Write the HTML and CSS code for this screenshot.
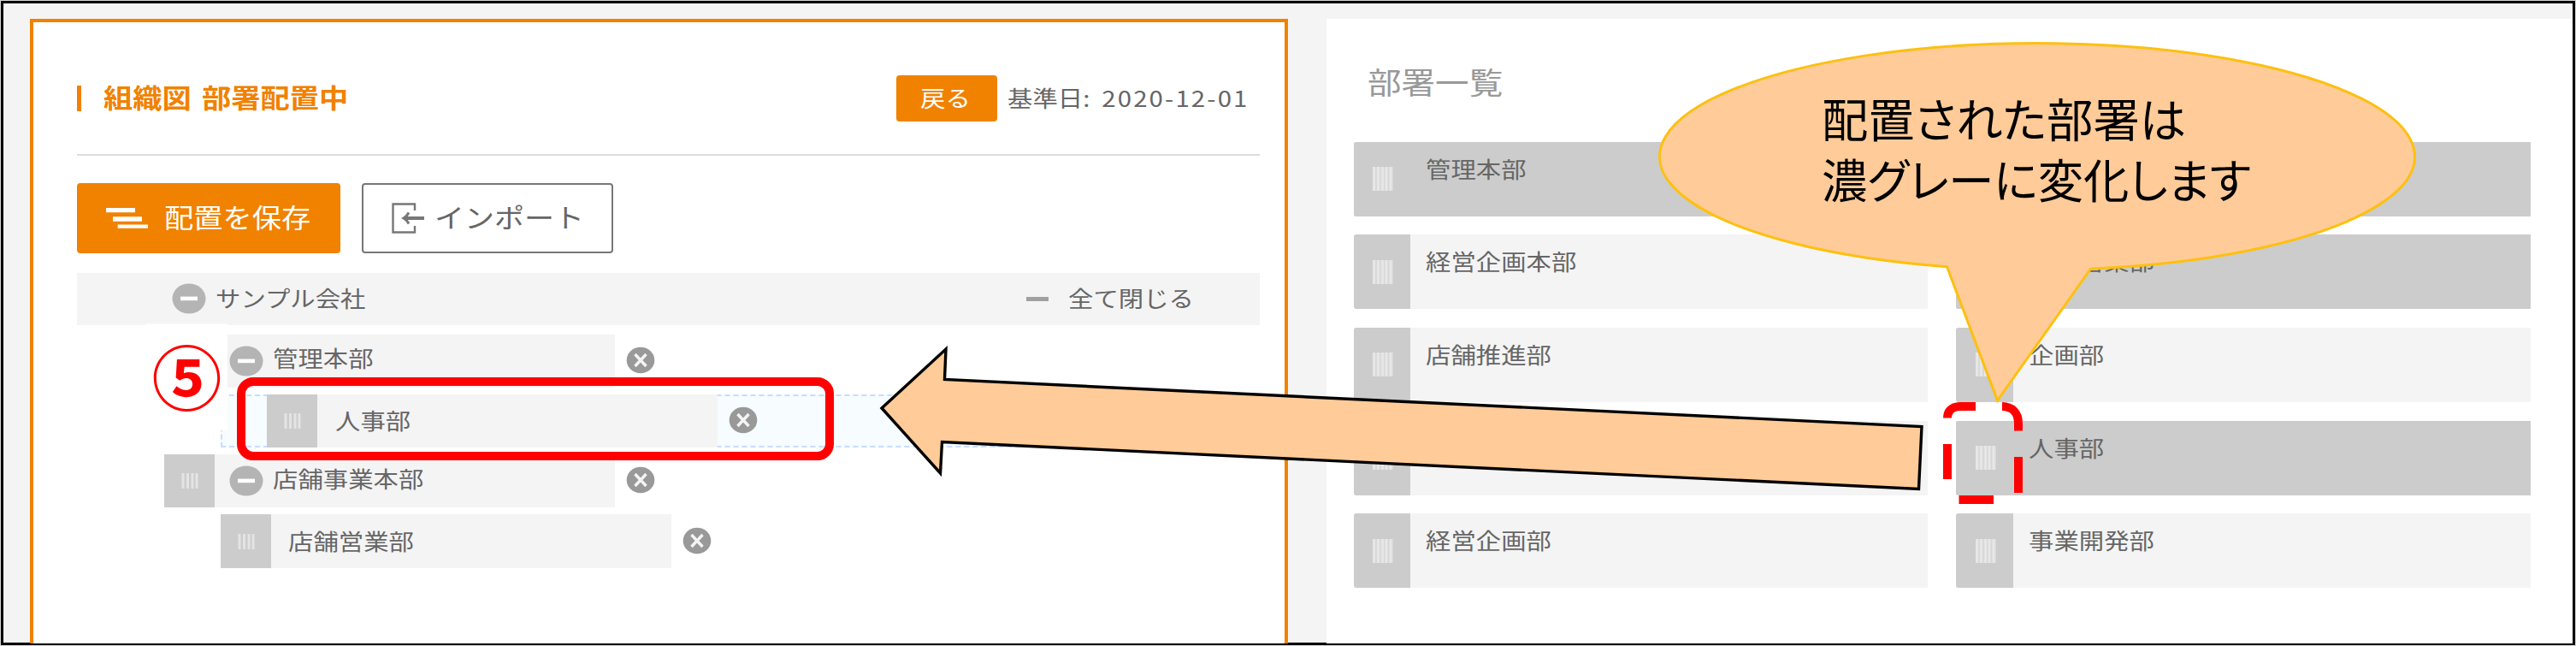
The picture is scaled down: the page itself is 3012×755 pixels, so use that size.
FILE: index.html
```html
<!DOCTYPE html>
<html lang="ja">
<head>
<meta charset="utf-8">
<title>組織図 部署配置中</title>
<link rel="stylesheet" href="styles.css">
</head>
<body>
<svg class="defs" width="0" height="0">
  <symbol id="minus" viewBox="0 0 40 36"><ellipse cx="20" cy="18" rx="19.5" ry="17.6" fill="#b4b4b4"/><rect x="10" y="15.6" width="20" height="4.6" fill="#fff"/></symbol>
  <symbol id="close" viewBox="0 0 34 32"><ellipse cx="17" cy="16" rx="16.3" ry="15.3" fill="#999"/><path d="M10.500 9 23.5 23M23.5 9 10.500 23" stroke="#f4f4f4" stroke-width="3.4"/></symbol>
  <symbol id="grip-s" viewBox="0 0 20 18"><path d="M2 0V18M7.5 0V18M13 0V18M18 0V18" stroke="#e4e4e4" stroke-width="3"/></symbol>
  <symbol id="grip" viewBox="0 0 24 28"><path d="M0 0H24V28H0Z" fill="#d9d9d9"/><path d="M1.5 0V28M6.5 0V28M11.5 0V28M16 0V28M21 0V28" stroke="#e8e8e8" stroke-width="2.600"/></symbol>
</svg>
<div class="frame">
  <main class="board">
    <section class="chart">
      <header class="chart-head">
        <h1 class="title"><span class="wide">組織図 部署配置中</span></h1>
        <button class="back"><span class="wide">戻る</span></button>
        <p class="date"><span class="wide">基準日: <span class="digits">2020-12-01</span></span></p>
      </header>
      <div class="actions">
        <button class="save">
          <svg width="49" height="24"><path d="M0 0h34v5.3H0zM8 10.3h34v5.5H8zM13.7 19.4H49v4.4H13.7z" fill="#fff"/></svg>
          <span class="wide">配置を保存</span>
        </button>
        <button class="import">
          <svg width="40" height="36" fill="none"><path d="M27 9V1.5H1.5V34.5H27V27" stroke="#777" stroke-width="2.4"/><path d="M38 18H15" stroke="#777" stroke-width="4"/><path d="M20 11.5Q17.5 16 14 18Q17.500 20 20 24.500" stroke="#777" stroke-width="3"/></svg>
          <span class="wide">インポート</span>
        </button>
      </div>
      <div class="root">
        <svg class="i-minus"><use href="#minus"/></svg>
        <span class="wide root-name">サンプル会社</span>
        <i class="dash"></i>
        <span class="wide">全て閉じる</span>
      </div>
      <ul class="tree">
        <li class="node n1">
          <div class="body"><svg class="i-minus"><use href="#minus"/></svg><span class="wide">管理本部</span></div>
          <svg class="i-close"><use href="#close"/></svg>
        </li>
        <li class="node n2">
          <div class="handle"><svg><use href="#grip-s"/></svg></div>
          <div class="body leaf"><span class="wide">人事部</span></div>
          <svg class="i-close"><use href="#close"/></svg>
        </li>
        <li class="node n3">
          <div class="handle"><svg><use href="#grip-s"/></svg></div>
          <div class="body"><svg class="i-minus"><use href="#minus"/></svg><span class="wide">店舗事業本部</span></div>
          <svg class="i-close"><use href="#close"/></svg>
        </li>
        <li class="node n4">
          <div class="handle"><svg><use href="#grip-s"/></svg></div>
          <div class="body leaf"><span class="wide">店舗営業部</span></div>
          <svg class="i-close"><use href="#close"/></svg>
        </li>
      </ul>
    </section>
    <section class="list">
      <h2><span class="wide">部署一覧</span></h2>
      <div class="cards">
        <div class="card placed"><div class="knob"><svg><use href="#grip"/></svg></div><span class="wide">管理本部</span></div>
        <div class="card placed"><div class="knob"><svg><use href="#grip"/></svg></div></div>
        <div class="card"><div class="knob"><svg><use href="#grip"/></svg></div><span class="wide">経営企画本部</span></div>
        <div class="card placed"><div class="knob"><svg><use href="#grip"/></svg></div><span class="wide">店舗営業部</span></div>
        <div class="card"><div class="knob"><svg><use href="#grip"/></svg></div><span class="wide">店舗推進部</span></div>
        <div class="card"><div class="knob"><svg><use href="#grip"/></svg></div><span class="wide">企画部</span></div>
        <div class="card"><div class="knob"><svg><use href="#grip"/></svg></div></div>
        <div class="card placed"><div class="knob"><svg><use href="#grip"/></svg></div><span class="wide">人事部</span></div>
        <div class="card"><div class="knob"><svg><use href="#grip"/></svg></div><span class="wide">経営企画部</span></div>
        <div class="card"><div class="knob"><svg><use href="#grip"/></svg></div><span class="wide">事業開発部</span></div>
      </div>
    </section>
  </main>
</div>
<svg class="notes" width="3012" height="755" viewBox="0 0 3012 755">
  <path fill="#fff" d="M170 378.500H266V389H256V458H170ZM256 455H266V503H256Z"/>
  <rect x="282" y="446" width="688" height="87" rx="14" class="mark"/>
  <path class="arrow" d="M1031 477 1106 408 1104.500 443.500 2247 498.500 2243.500 571.500 1101.500 516.500 1099.500 553Z"/>
  <path class="bubble" d="M2276.500 311.700A441.500 132.500 0 1 1 2444.500 314.200L2335.500 468Z"/>
  <path class="mark" d="M2277 488.500C2277 480 2283 475 2292 475H2310M2341 475C2352 475 2360 482 2360 495V503.500M2360 534V576M2277 519V560M2290.500 584H2331"/>
  <text class="step" x="177.500" y="473">⑤</text>
  <text class="say" x="2130" y="161" textLength="426" lengthAdjust="spacingAndGlyphs">配置された部署は</text>
  <text class="say" x="2130" y="232" textLength="502" lengthAdjust="spacingAndGlyphs">濃グレーに変化します</text>
</svg>
</body>
</html>
```
FILE: styles.css
```css
* { box-sizing: border-box; }
body {
  margin: 0;
  width: 3012px;
  height: 755px;
  overflow: hidden;
  background: #d4d8d5;
  font-family: "Noto Sans CJK JP", sans-serif;
  color: #666;
}
h1, h2, p, ul { margin: 0; padding: 0; font-weight: 400; list-style: none; }
button { font: inherit; padding: 0; border: 0; text-align: left; }
svg { display: block; flex: none; }
.defs { position: absolute; }
.frame { padding: 1px; height: 755px; }
.board {
  display: flex;
  gap: 45px;
  height: 753px;
  padding: 17.5px 0 0 31px;
  border: 3px solid #000;
  background: #f4f4f4;
}

/* Labels are set slightly extended */
.wide {
  display: block;
  flex: none;
  font-size: 26px;
  line-height: 36px;
  white-space: nowrap;
  transform: translateY(-1.500px) scaleX(1.13);
  transform-origin: 0 50%;
}

.chart {
  flex: none;
  width: 1471px;
  height: 730px;
  padding: 0 29px 0 51px;
  border: 4px solid #f08200;
  border-bottom: 0;
  background: #fff;
}
.chart-head {
  display: flex;
  align-items: center;
  height: 156px;
  padding-top: 45px;
  padding-bottom: 20px;
  border-bottom: 2px solid #ddd;
}
.title {
  width: 958px;
  height: 30px;
  display: flex;
  align-items: center;
  padding-left: 25.500px;
  border-left: 5.5px solid #f08200;
}
.title .wide { font-size: 30.300px; font-weight: 700; color: #f08200; word-spacing: 4px; transform: translateY(-2.500px) scaleX(1.13); }
.back {
  width: 117.500px;
  height: 54px;
  padding-left: 28px;
  border-radius: 4px;
  background: #f08200;
  color: #fff;
}
.date { padding-left: 12px; }
.date .wide { word-spacing: 6.500px; }
.digits { letter-spacing: 1.900px; }
.actions { display: flex; gap: 25.500px; height: 82px; margin-top: 32.500px; }
.save, .import { display: flex; align-items: center; border-radius: 4px; }
.save { width: 307.500px; padding-left: 33.500px; gap: 19px; background: #f08200; color: #fff; }
.import { width: 294px; padding-left: 33px; gap: 10px; border: 2px solid #777; background: #fff; color: #666; }
.save .wide { font-size: 30.300px; }
.import .wide { font-size: 31px; }
.save .wide, .import .wide { transform: translateY(-2.500px) scaleX(1.13); }
.root {
  display: flex;
  align-items: center;
  height: 61px;
  margin-top: 22.500px;
  padding-left: 111px;
  background: #f4f4f4;
}
.i-minus { width: 40px; height: 36px; }
.i-close { width: 34px; height: 32px; margin-top: -2px; }
.root-name { width: 948px; margin-left: 11px; }
.dash { width: 26px; height: 5px; margin-right: 23px; background: #a0a0a0; }

.tree { display: grid; gap: 8px; margin-top: 11px; }
.node { display: flex; align-items: center; height: 62.300px; }
.handle {
  display: grid;
  place-items: center;
  width: 59px;
  height: 100%;
  background: #ccc;
}
.handle svg { width: 20px; height: 18px; }
.body {
  display: flex;
  align-items: center;
  height: 100%;
  padding-left: 17px;
  background: #f4f4f4;
}
.body .wide { margin-left: 11px; margin-top: -5px; }
.body.leaf { width: 468px; padding-left: 9px; }
.body.leaf .wide { margin-top: 0; }
.node .i-close { margin-left: 13px; }
.n1 { margin-left: 176px; }
.n1 .body { width: 452.500px; padding-left: 2px; }
.n2 {
  margin-left: 168px;
  padding-left: 52px;
  border: 2px dashed #c8dcff;
  border-width: 2px 0 2px 2px;
  background: #f6fcff;
}
.n2 .handle, .n2 .body { height: 62.300px; }
.n2 .body.leaf { padding-left: 10px; }
.n3 { margin-left: 102px; }
.n3 .body { width: 467.500px; }
.n4 { margin-left: 168px; }

.list { flex: 1; height: 730px; padding: 0 49px 0 31.500px; background: #fff; }
.list h2 { height: 144px; padding: 51px 0 0 16px; color: #999; }
.list h2 .wide { font-size: 35px; line-height: 46px; }
.cards {
  display: grid;
  grid-template-columns: 671.500px 671.500px;
  grid-auto-rows: 87px;
  gap: 21.700px 33.300px;
}
.card { display: flex; border-radius: 3px 0 0 3px; background: #f4f4f4; }
.card.placed { background: #ccc; }
.knob {
  display: grid;
  place-items: center;
  width: 66.500px;
  height: 100%;
  border-radius: 3px 0 0 3px;
  background: #ccc;
}
.knob svg { width: 24px; height: 28px; margin-left: 2px; }
.card .wide { margin: 14px 0 0 18px; }

/* Annotations drawn over the screen */
.notes { position: absolute; left: 0; top: 0; }
.mark { fill: none; stroke: #f00; stroke-width: 10; }
.arrow { fill: #ffcb99; stroke: #000; stroke-width: 3.400; }
.bubble { fill: #ffcb99; stroke: #fdc010; stroke-width: 3; }
.step { font-size: 82px; font-weight: 700; fill: #f00; }
.say { font-size: 54px; fill: #000; font-feature-settings: "palt"; }
```
